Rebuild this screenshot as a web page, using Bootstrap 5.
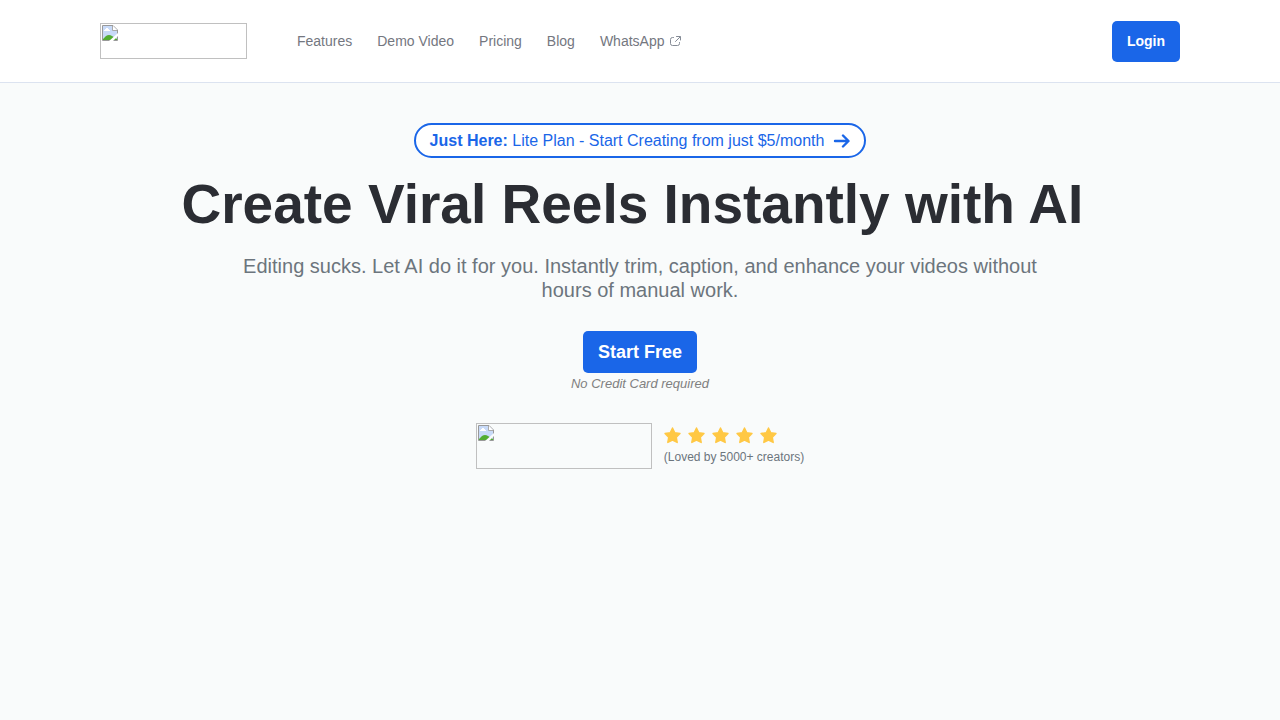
<!DOCTYPE html>
<html lang="en">
<head>
<meta charset="utf-8">
<meta name="viewport" content="width=device-width, initial-scale=1">
<title>Create Viral Reels Instantly with AI</title>
<link rel="stylesheet" href="https://cdn.jsdelivr.net/npm/bootstrap@5.3.0/dist/css/bootstrap.min.css">
<style>
  body { font-family: "Liberation Sans", Arial, sans-serif; background: #f9fbfb; color: #6c757d; --brand: #1a66e8; }
  .page-wrap { max-width: 1110px; padding: 0 15px; }
  .site-header { background: #fff; border-bottom: 1px solid #dce3f0; }
  .site-header .page-wrap { min-height: 82px; }
  .missing-pic { display: block; border: 1px solid #c0c0c0; padding: 1px; }
  .missing-pic svg { display: block; }
  .pic-logo { width: 147px; height: 36px; }
  .pic-people { width: 176px; height: 46px; }
  .site-links { gap: 25px; margin-left: 50px; font-size: 14px; line-height: 20px; }
  .site-links a { color: #74777f; text-decoration: none; }
  .site-links svg { margin-left: 5px; }
  .btn-brand { background: var(--brand); color: #fff; font-weight: 700; border: 0; border-radius: 5px; padding: 10px 15px; }
  .btn-brand:hover { background: #1257cc; color: #fff; }
  .btn-login { font-size: 14px; line-height: 21px; }
  .btn-start { font-size: 18px; line-height: 22px; margin-top: 29px; }
  .promo-link { border: 2px solid var(--brand); border-radius: 18px; background: #fff; color: var(--brand); text-decoration: none; padding: 4px 14px; font-size: 16px; line-height: 23px; }
  .promo-link svg { margin-left: 8px; }
  .hero { padding-top: 40px; }
  .hero-title { font-size: 55px; line-height: 62px; font-weight: 700; color: #2b2d33; margin: 15px 0 0; }
  .hero-text { font-size: 20px; line-height: 24px; max-width: 820px; margin: 19px 0 0; }
  .hero-note { font-size: 13px; line-height: 22px; color: #808080; font-style: italic; }
  .loved-text { font-size: 12px; line-height: 18px; margin-top: 4px; }
</style>
</head>
<body>
<svg class="d-none" aria-hidden="true">
  <symbol id="missing" viewBox="0 0 16 16">
    <path d="M1 1h10l4 4v10H1z" fill="#c8daf8"/>
    <path d="M2 6V5h1V4h1V3h2v1h1v1h1v1z" fill="#fff"/>
    <path d="M1 15v-1l3-3c2-1.300 4-1.300 6 0l5 3v1z" fill="#53ad32"/>
    <path d="M.5 .5h10.500l4.500 4.500v10.500H.5z" fill="none" stroke="#999"/>
    <path d="M11 1v4h4z" fill="#fff"/>
    <path d="M10.500 1v4.500H15" fill="none" stroke="#aaa"/>
    <path d="M7 16l9-8v3l-5 5z"/>
  </symbol>
  <symbol id="star" viewBox="0 0 18 18"><path d="M8.500 2l2.300 4.700 5.200.8-3.700 3.700.9 5.300-4.700-2.400-4.700 2.400.9-5.300L1 7.500l5.200-.8z" fill="#ffc844" stroke="#ffc844" stroke-width="1.400" stroke-linejoin="round"/></symbol>
</svg>
<header class="site-header">
  <div class="container-fluid page-wrap d-flex align-items-center">
    <a href="#" class="missing-pic pic-logo" aria-label="Home"><svg width="16" height="16" fill="#fff"><use href="#missing"/></svg></a>
    <nav class="site-links d-flex align-items-center">
      <a href="#">Features</a>
      <a href="#">Demo Video</a>
      <a href="#">Pricing</a>
      <a href="#">Blog</a>
      <a href="#" class="d-flex align-items-center">WhatsApp
        <svg width="13" height="12" viewBox="0 0 13 12" fill="none" stroke="#858b96" stroke-linecap="round" aria-hidden="true"><path d="M4.500 2.500H3.500q-2 0-2 2v4q0 2 2 2h5q2 0 2-2V7.500M7.500 1.500h4V5M11 2L6.500 6.500"/></svg></a>
    </nav>
    <button type="button" class="btn btn-brand btn-login ms-auto">Login</button>
  </div>
</header>
<main class="container-fluid page-wrap hero d-flex flex-column align-items-center text-center">
  <a href="#" class="promo-link d-flex align-items-center"><span><b>Just Here:</b> Lite Plan - Start Creating from just $5/month</span>
    <svg width="18" height="16" viewBox="0 0 18 16" fill="none" stroke="currentColor" stroke-width="2.400" stroke-linecap="round" stroke-linejoin="round" aria-hidden="true"><path d="M3 8h13M11 2.500L16.500 8 11 13.500"/></svg></a>
  <h1 class="hero-title">Create Viral Reels Instantly with AI&nbsp;</h1>
  <p class="hero-text">Editing sucks. Let AI do it for you. Instantly trim, caption, and enhance your videos without hours of manual work.</p>
  <button type="button" class="btn btn-brand btn-start">Start Free</button>
  <div class="hero-note">No Credit Card required</div>
  <div class="d-flex flex-wrap justify-content-center align-items-center mt-4 pt-1">
    <div class="missing-pic pic-people" role="img" aria-label="Creators"><svg width="16" height="16" fill="#f9fbfb"><use href="#missing"/></svg></div>
    <div class="text-start ms-2 ps-1">
      <div class="d-flex" role="img" aria-label="5 stars">
        <svg width="24" height="18"><use href="#star" width="18" height="18"/></svg>
        <svg width="24" height="18"><use href="#star" width="18" height="18"/></svg>
        <svg width="24" height="18"><use href="#star" width="18" height="18"/></svg>
        <svg width="24" height="18"><use href="#star" width="18" height="18"/></svg>
        <svg width="24" height="18"><use href="#star" width="18" height="18"/></svg>
      </div>
      <div class="loved-text">(Loved by 5000+ creators)</div>
    </div>
  </div>
</main>
<script src="https://cdn.jsdelivr.net/npm/bootstrap@5.3.0/dist/js/bootstrap.bundle.min.js"></script>
</body>
</html>
